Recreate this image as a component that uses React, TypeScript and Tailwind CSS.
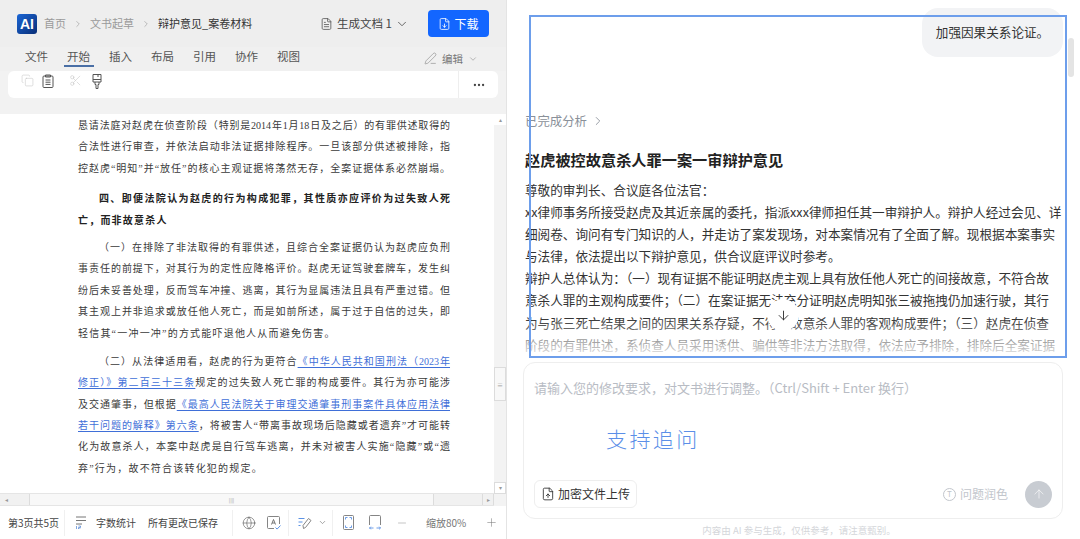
import {
  ArrowDown,
  ArrowUp,
  ChevronDown,
  ChevronRight,
  Copy,
  FileDown,
  FileText,
  FileUp,
  Globe,
  Minus,
  MoreHorizontal,
  PenLine,
  Plus,
  Scissors,
} from "lucide-react";

const TABS = ["文件", "开始", "插入", "布局", "引用", "协作", "视图"];

// copy below is typed with ascii punctuation, the page shows the full-width forms
function zh(text: string) {
  return text
    .replace(/,/g, "\uFF0C")
    .replace(/:/g, "\uFF1A")
    .replace(/;/g, "\uFF1B")
    .replace(/\(/g, "\uFF08")
    .replace(/\)/g, "\uFF09");
}

const ANSWER = [
  "尊敬的审判长、合议庭各位法官:",
  "xx律师事务所接受赵虎及其近亲属的委托,指派xxx律师担任其一审辩护人。辩护人经过会见、详",
  "细阅卷、询问有专门知识的人,并走访了案发现场,对本案情况有了全面了解。现根据本案事实",
  "与法律,依法提出以下辩护意见,供合议庭评议时参考。",
  "辩护人总体认为:(一)现有证据不能证明赵虎主观上具有放任他人死亡的间接故意,不符合故",
  "意杀人罪的主观构成要件;(二)在案证据无法充分证明赵虎明知张三被拖拽仍加速行驶,其行",
  "为与张三死亡结果之间的因果关系存疑,不符合故意杀人罪的客观构成要件;(三)赵虎在侦查",
  "阶段的有罪供述,系侦查人员采用诱供、骗供等非法方法取得,依法应予排除,排除后全案证据",
];

function Line({ children, last, bold, indent }: { children: React.ReactNode; last?: boolean; bold?: boolean; indent?: boolean }) {
  return (
    <div
      className={`h-[21.4px] whitespace-nowrap leading-[21.4px] ${last ? "tracking-[1.2px]" : "[text-align-last:justify]"} ${bold ? "font-bold" : ""} ${indent ? "pl-[21px]" : ""}`}
    >
      {children}
    </div>
  );
}

function Doc() {
  const link = "text-[#3f6fd8] underline underline-offset-2";
  return (
    <div className="relative flex-1 overflow-hidden bg-white">
      <div className="ml-[78px] w-[372px] font-['Liberation_Serif','Noto_Sans_CJK_SC',sans-serif] text-[10px] text-[#3a3a3a]">
        <div className="flex flex-col pt-[1px]">
          <Line>{zh("恳请法庭对赵虎在侦查阶段(特别是2014年1月18日及之后)的有罪供述取得的")}</Line>
          <Line>{zh("合法性进行审查,并依法启动非法证据排除程序。一旦该部分供述被排除,指")}</Line>
          <Line>{zh("控赵虎“明知”并“放任”的核心主观证据将荡然无存,全案证据体系必然崩塌。")}</Line>
        </div>
        <div className="mt-[9px] flex flex-col text-[#222]">
          <Line bold indent>{zh("四、即便法院认为赵虎的行为构成犯罪,其性质亦应评价为过失致人死")}</Line>
          <Line bold last>{zh("亡,而非故意杀人")}</Line>
        </div>
        <div className="mt-[6px] flex flex-col">
          <Line indent>{zh("(一)在排除了非法取得的有罪供述,且综合全案证据仍认为赵虎应负刑")}</Line>
          <Line>{zh("事责任的前提下,对其行为的定性应降格评价。赵虎无证驾驶套牌车,发生纠")}</Line>
          <Line>{zh("纷后未妥善处理,反而驾车冲撞、逃离,其行为显属违法且具有严重过错。但")}</Line>
          <Line>{zh("其主观上并非追求或放任他人死亡,而是如前所述,属于过于自信的过失,即")}</Line>
          <Line last>{zh("轻信其“一冲一冲”的方式能吓退他人从而避免伤害。")}</Line>
        </div>
        <div className="mt-[7px] flex flex-col">
          <Line indent>{zh("(二)从法律适用看,赵虎的行为更符合")}<span className={link}>{zh("《中华人民共和国刑法(2023年")}</span></Line>
          <Line><span className={link}>{zh("修正)》第二百三十三条")}</span>规定的过失致人死亡罪的构成要件。其行为亦可能涉</Line>
          <Line>{zh("及交通肇事,但根据")}<span className={link}>《最高人民法院关于审理交通肇事刑事案件具体应用法律</span></Line>
          <Line><span className={link}>若干问题的解释》第六条</span>{zh(",将被害人“带离事故现场后隐藏或者遗弃”才可能转")}</Line>
          <Line>{zh("化为故意杀人,本案中赵虎是自行驾车逃离,并未对被害人实施“隐藏”或“遗")}</Line>
          <Line last>{zh("弃”行为,故不符合该转化犯的规定。")}</Line>
        </div>
      </div>
    </div>
  );
}

function ClipboardIcon() {
  return (
    <svg viewBox="0 0 12 14" className="ml-[8px] h-[14px] w-[12px] text-[#555]" fill="none" stroke="currentColor" strokeWidth="1">
      <rect x="1" y="2" width="10" height="11.5" rx="1" />
      <path d="M3.5 1h5v2h-5zM3.5 6h5M3.5 8.2h5M3.5 10.4h5" />
    </svg>
  );
}

function BrushIcon() {
  return (
    <svg viewBox="0 0 10 15" className="ml-[10px] h-[15px] w-[10px] text-[#555]" fill="none" stroke="currentColor" strokeWidth="1">
      <path d="M1 .5h8v7.5H1zM1 5.5h8M3 8v2.5h1v4h2v-4h1V8" />
      <path d="M6 .5v2.5" />
    </svg>
  );
}

function CountIcon() {
  return (
    <svg viewBox="0 0 12 13" className="ml-[10px] h-[13px] w-[12px]" fill="none">
      <path d="M1 1h10M1 4.5h10M1 8h6" stroke="#777" strokeWidth="1" />
      <path d="M1.500 10v3M3.500 10h2v1.500h-2V13h2" stroke="#4a7fd0" strokeWidth="0.7" />
    </svg>
  );
}

function SpellIcon() {
  return (
    <svg viewBox="0 0 14 14" className="ml-[11px] h-[14px] w-[14px]" fill="none">
      <path d="M7 12.500H1.500a1 1 0 0 1-1-1v-10a1 1 0 0 1 1-1h10a1 1 0 0 1 1 1V8" stroke="#777" strokeWidth="0.9" />
      <path d="M4.500 8.500 6.500 3.500l2 5M5.200 7h2.600" stroke="#666" strokeWidth="0.9" />
      <path d="m8.500 11.500 1.600 1.600 3.400-3.600" stroke="#5b92e5" strokeWidth="1" />
    </svg>
  );
}

function RewriteIcon() {
  return (
    <svg viewBox="0 0 14 14" className="ml-[9px] h-[14px] w-[14px]" fill="none">
      <path d="M.5 2.500h6M.5 6h4M.5 9.500h2" stroke="#5b92e5" strokeWidth="1" />
      <path d="M5.500 12.500 5 9.500 10.500 2.500l2.500 2-5.500 7z" stroke="#777" strokeWidth="0.9" />
    </svg>
  );
}

function FitPageIcon() {
  return (
    <svg viewBox="0 0 11 15" className="ml-[10px] h-[15px] w-[11px]" fill="none">
      <rect x="0.5" y="0.5" width="10" height="14" rx="1" stroke="#777" strokeWidth="0.9" />
      <path d="M2.500 4.500v-2h2M6.500 2.500h2v2M2.500 10.500v2h2M6.500 12.500h2v-2" stroke="#5b92e5" strokeWidth="0.9" />
    </svg>
  );
}

function FitWidthIcon() {
  return (
    <svg viewBox="0 0 12 15" className="ml-[15px] h-[15px] w-[12px]" fill="none">
      <path d="M.5 10V1.500a1 1 0 0 1 1-1h9a1 1 0 0 1 1 1V10" stroke="#777" strokeWidth="0.9" />
      <path d="M.5 13h4M1.800 11.700.5 13l1.300 1.300M11.500 13h-4M10.200 11.700 11.500 13l-1.300 1.300" stroke="#5b92e5" strokeWidth="0.9" />
    </svg>
  );
}

function LeftPanel() {
  return (
    <div className="flex h-full w-[507px] shrink-0 flex-col border-r border-[#e4e4e4] bg-white font-['Noto_Sans_CJK_SC',sans-serif]">
      <div className="flex h-[47px] shrink-0 items-center bg-[#eeeeee] pl-[17px] pr-[17px] text-[11px] text-[#9a9a9a]">
        <div className="flex h-[20px] w-[20px] items-center justify-center rounded-[3px] bg-gradient-to-br from-[#1a66d6] to-[#0a2f78] font-['Liberation_Sans',sans-serif] text-[14px] font-bold leading-none text-white">
          AI
        </div>
        <span className="ml-[7px]">首页</span>
        <ChevronRight className="mx-[7px] h-[10px] w-[10px] text-[#999]" strokeWidth={1.5} />
        <span>文书起草</span>
        <ChevronRight className="mx-[7px] h-[10px] w-[10px] text-[#999]" strokeWidth={1.5} />
        <span className="text-[#333]">辩护意见_案卷材料</span>
        <FileText className="ml-auto h-[14px] w-[13px] text-[#555]" strokeWidth={1.5} />
        <span className="ml-[4px] text-[11.5px] text-[#444]">生成文档 1</span>
        <ChevronDown className="ml-[3px] h-[14px] w-[14px] text-[#555]" strokeWidth={1.5} />
        <button className="ml-[19px] flex h-[27px] w-[61px] items-center justify-center gap-[3px] rounded-[4px] bg-[#1366ff] text-[12px] text-white">
          <FileDown className="h-[14px] w-[13px]" strokeWidth={1.5} />
          下载
        </button>
      </div>

      <div className="flex h-[24px] shrink-0 items-start bg-[#f0f0f0] pl-[25px] pr-[28px] text-[11.5px] text-[#555]">
        <div className="flex gap-[19px]">
          {TABS.map((tab) => (
            <div key={tab} className="relative h-[20px] leading-[19px]">
              {tab}
              {tab === "开始" && <div className="absolute -left-[3px] -right-[4px] top-[18px] h-[2px] bg-[#4a6fa5]" />}
            </div>
          ))}
        </div>
        <div className="ml-auto mt-[4px] flex items-center text-[#777]">
          <PenLine className="h-[13px] w-[13px]" strokeWidth={1} />
          <span className="ml-[5px] text-[10.5px]">编辑</span>
          <ChevronDown className="ml-[5px] h-[10px] w-[10px] text-[#aaa]" />
        </div>
      </div>

      <div className="flex h-[43px] shrink-0 items-start bg-[#f2f2f2] px-[8px]">
        <div className="flex h-[27px] w-full rounded-[6px] bg-white">
          <div className="flex flex-1 items-start pl-[13px] pt-[3px]">
            <Copy className="h-[13px] w-[13px] text-[#c4c4c4]" strokeWidth={1} />
            <ClipboardIcon />
            <Scissors className="ml-[15px] h-[13px] w-[13px] text-[#c4c4c4]" strokeWidth={1} />
            <BrushIcon />
          </div>
          <div className="flex w-[40px] items-center justify-center border-l border-[#eeeeee]">
            <MoreHorizontal className="h-[14px] w-[14px] text-[#444]" />
          </div>
        </div>
      </div>

      <div className="flex min-h-0 flex-1">
        <div className="flex min-w-0 flex-1 flex-col">
          <Doc />
          <div className="flex h-[13px] shrink-0 items-stretch border-y border-[#e5e5e5] bg-[#f1f1f1] text-[6px] text-[#999]">
            <div className="flex w-[12px] items-center justify-center">◂</div>
            <div className="ml-[17px] flex w-[405px] items-center justify-center border-x border-[#dcdcdc] bg-[#f8f8f8] text-[5px]">
              ||||
            </div>
            <div className="ml-auto flex w-[12px] items-center justify-center border-x border-[#dcdcdc]">▸</div>
          </div>
        </div>
        <div className="flex w-[12px] shrink-0 flex-col bg-[#f3f3f3] text-center text-[6px] text-[#999]">
          <div className="h-[11px] bg-white leading-[11px]">▴</div>
          <div className="mt-[242px] flex h-[34px] items-center justify-center border border-[#dcdcdc] bg-[#f8f8f8] text-[6px]">≡</div>
          <div className="mb-[12px] mt-auto h-[12px] border border-[#dcdcdc] bg-white leading-[10px]">▾</div>
        </div>
      </div>

      <div className="flex h-[33px] shrink-0 items-center bg-white pl-[8px] text-[10px] text-[#444]">
        <span className="w-[52px] whitespace-nowrap">第3页共5页</span>
        <div className="ml-[4px] h-[26px] w-px bg-[#f0f0f0]" />
        <CountIcon />
        <span className="ml-[9px]">字数统计</span>
        <span className="ml-[12px]">所有更改已保存</span>
        <div className="ml-[14px] h-[26px] w-px bg-[#f0f0f0]" />
        <Globe className="ml-[9px] h-[14px] w-[14px] text-[#555]" strokeWidth={1} />
        <SpellIcon />
        <div className="ml-[7px] h-[26px] w-px bg-[#f0f0f0]" />
        <RewriteIcon />
        <ChevronDown className="ml-[6px] h-[9px] w-[9px] text-[#888]" />
        <div className="ml-[5px] h-[26px] w-px bg-[#f0f0f0]" />
        <FitPageIcon />
        <FitWidthIcon />
        <Minus className="ml-[15px] h-[12px] w-[12px] text-[#888]" strokeWidth={1} />
        <span className="ml-[18px] w-[41px] whitespace-nowrap text-[#777]">缩放80%</span>
        <Plus className="ml-[18px] h-[13px] w-[13px] text-[#777]" strokeWidth={1} />
      </div>
    </div>
  );
}

function RightPanel() {
  return (
    <div className="relative flex h-full flex-1 flex-col bg-white pl-[16px] pr-[17px] font-['Noto_Sans_CJK_SC',sans-serif]">
      <div className="relative h-[362px] shrink-0 overflow-hidden pl-[2px]">
        <div className="ml-auto mt-[8px] flex h-[49px] w-[141px] items-center justify-center rounded-[16px] bg-[#f2f3f5] text-[12.6px] text-[#333]">
          加强因果关系论证。
        </div>
        <div className="mt-[56px] flex h-[16px] items-center text-[12.4px] text-[#8a9099]">
          已完成分析
          <ChevronRight className="ml-[4px] h-[14px] w-[14px]" strokeWidth={1.5} />
        </div>
        <div className="mt-[20px] whitespace-nowrap text-[15.2px] font-semibold leading-[20px] text-[#222]">赵虎被控故意杀人罪一案一审辩护意见</div>
        <div className="mt-[10px] whitespace-nowrap text-[12.63px] leading-[22.1px] text-[#333]">
          {ANSWER.map((line) => (
            <div key={line}>{zh(line)}</div>
          ))}
        </div>
        <div className="absolute inset-x-0 top-[318px] h-[44px] bg-gradient-to-b from-white/0 via-white/50 to-white" />
        <div className="absolute left-[244px] top-[299px] flex h-[32px] w-[32px] items-center justify-center rounded-full bg-white">
          <ArrowDown className="h-[15px] w-[15px] text-[#333]" strokeWidth={1.5} />
        </div>
      </div>

      <div className="flex h-[157px] shrink-0 flex-col rounded-[12px] border border-[#eeeeee] px-[10px] pb-[10px] pt-[15px]">
        <div className="whitespace-nowrap text-[13px] leading-[20px] text-[#b8bcc4]">{zh("请输入您的修改要求,对文书进行调整。(Ctrl/Shift + Enter 换行)")}</div>
        <div className="ml-[72px] mt-[24px] text-[21px] font-light leading-[32px] tracking-[2.4px] text-[#5b8fe8]">支持追问</div>
        <div className="mt-auto flex items-center">
          <button className="flex h-[28px] w-[103px] items-center justify-center gap-[3px] rounded-[6px] border border-[#eeeeee] text-[12px] text-[#333]">
            <FileUp className="h-[14px] w-[14px]" strokeWidth={1.5} />
            加密文件上传
          </button>
          <div className="ml-auto flex items-center text-[12px] text-[#c2c6cc]">
            <span className="flex h-[13px] w-[13px] items-center justify-center rounded-full border border-[#c2c6cc] text-[8px] leading-none">T</span>
            <span className="ml-[4px]">问题润色</span>
          </div>
          <div className="ml-[17px] flex h-[27px] w-[27px] items-center justify-center rounded-full bg-[#c8ccd2]">
            <ArrowUp className="h-[14px] w-[14px] text-white/70" strokeWidth={1.5} />
          </div>
        </div>
      </div>

      <div className="mt-[4px] pl-[12px] text-center text-[9.5px] leading-[14px] text-[#d4d6da]">{zh("内容由 AI 参与生成,仅供参考,请注意甄别。")}</div>

      <div className="absolute left-[22px] top-[15px] h-[343px] w-[538px] border-2 border-[#6d9eeb]" />
      <div className="absolute right-[6px] top-[38px] h-[39px] w-[6px] rounded-full bg-[#e4e4e4]" />
    </div>
  );
}

export default function App() {
  return (
    <div className="flex h-[539px] w-[1080px] overflow-hidden bg-white">
      <LeftPanel />
      <RightPanel />
    </div>
  );
}
